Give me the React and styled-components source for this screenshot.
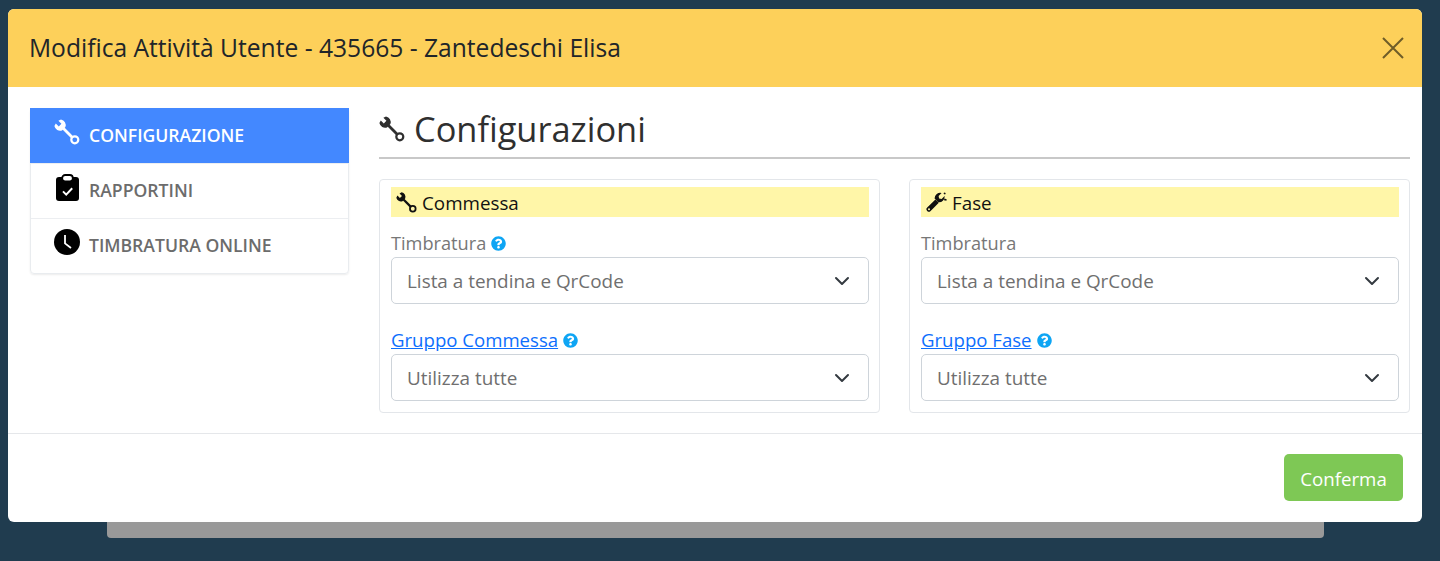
import React from "react";
import styled, { createGlobalStyle } from "styled-components";
import { FaQuestionCircle } from "react-icons/fa";

const GlobalStyle = createGlobalStyle`
  html, body {
    margin: 0;
    height: 100%;
    background: #203c4f;
    font-family: "Open Sans", "Noto Sans", sans-serif;
    overflow: hidden;
  }
`;

const Page = styled.div`
  position: relative;
  width: 1440px;
  height: 561px;
  box-sizing: border-box;
  padding: 9px 18px 0 8px;
`;

const BackCard = styled.div`
  position: absolute;
  left: 107px;
  top: 500px;
  width: 1217px;
  height: 38px;
  background: #999;
  border-radius: 4px;
`;

const Modal = styled.div`
  position: relative;
  height: 513px;
  display: flex;
  flex-direction: column;
  background: #fff;
  border-radius: 6px;
  overflow: hidden;
`;

const Header = styled.header`
  height: 78px;
  flex: none;
  display: flex;
  align-items: center;
  justify-content: space-between;
  box-sizing: border-box;
  padding: 0 18px 0 21px;
  background: #fdd05a;
`;

const Title = styled.h5`
  margin: 0;
  padding-bottom: 2px;
  font-size: 24.6px;
  font-weight: 500;
  color: #212529;
`;

const CloseIcon = styled.svg`
  width: 22px;
  height: 22px;
  display: block;
  stroke: #6f5d28;
  stroke-width: 2;
  fill: none;
`;

const Body = styled.div`
  flex: 1;
  display: flex;
  align-items: flex-start;
  gap: 30px;
  padding: 21px 12px 0 22px;
`;

const Sidebar = styled.nav`
  width: 319px;
  flex: none;
  box-sizing: border-box;
  border: 1px solid #e9ecef;
  border-radius: 4px;
  box-shadow: 0 1px 2px rgba(0, 0, 0, 0.08);
`;

const NavItem = styled.a`
  height: ${(p) => (p.$active ? "55px" : "54.5px")};
  margin: ${(p) => (p.$active ? "-1px -1px 0" : "0")};
  display: flex;
  align-items: center;
  gap: 9px;
  box-sizing: border-box;
  padding: 0 0 1px ${(p) => (p.$active ? "24px" : "23px")};
  font-size: 17.6px;
  font-weight: 600;
  color: ${(p) => (p.$active ? "#fff" : "#6c6c6c")};
  background: ${(p) => (p.$active ? "#4388ff" : "transparent")};
  & + & {
    border-top: 1px solid #eceef1;
  }
  &:last-child {
    height: 55px;
    padding-bottom: 2px;
  }
`;

const NavIcon = styled.span`
  width: 26px;
  height: 30px;
  margin-top: -6px;
  display: flex;
  align-items: center;
  justify-content: center;
  color: ${(p) => (p.$active ? "#fff" : "#000")};
`;

const Content = styled.main`
  flex: 1;
  min-width: 0;
`;

const SectionTitle = styled.h3`
  margin: 0 0 20px;
  height: 51px;
  display: flex;
  align-items: center;
  gap: 9px;
  box-sizing: border-box;
  border-bottom: 2px solid #c8c8c8;
  font-size: 34.4px;
  font-weight: 500;
  color: #2f2f2f;
  padding-bottom: 8px;
`;

const Columns = styled.div`
  display: grid;
  grid-template-columns: 501px 501px;
  gap: 29px;
`;

const Panel = styled.section`
  height: 234px;
  box-sizing: border-box;
  padding: 7px 10px 0 11px;
  border: 1px solid #e3e6ea;
  border-radius: 4px;
`;

const PanelTitle = styled.div`
  height: 30px;
  display: flex;
  align-items: center;
  gap: 5px;
  padding: 0 0 0 5px;
  background: #fff6a8;
  font-size: 18.8px;
  font-weight: 500;
  color: #111;
`;

const PanelTitleText = styled.span`
  position: relative;
  top: 1px;
`;

const Field = styled.div`
  margin-top: ${(p) => p.$gap}px;
`;

const Label = styled.div`
  height: 26px;
  display: flex;
  align-items: center;
  gap: 5px;
  box-sizing: border-box;
  padding-bottom: 3px;
  font-size: 18.2px;
  color: #777;
`;

const LabelLink = styled.a`
  color: #0d6efd;
  font-size: 18.6px;
  text-decoration: underline;
`;

const Help = styled(FaQuestionCircle)`
  width: 15px;
  height: 15px;
  color: #0ea5f4;
  margin-top: 2px;
`;

const Select = styled.div`
  height: 47px;
  display: flex;
  align-items: center;
  justify-content: space-between;
  box-sizing: border-box;
  padding: 0 18px 0 15px;
  border: 1px solid #ced4da;
  border-radius: 5px;
  font-size: 18.9px;
  color: #6f6f6f;
`;

const Chevron = styled.svg`
  width: 16px;
  height: 16px;
  fill: none;
  stroke: #343a40;
  stroke-width: 2;
  stroke-linecap: round;
  stroke-linejoin: round;
`;

const Footer = styled.footer`
  height: 89px;
  flex: none;
  display: flex;
  align-items: center;
  justify-content: flex-end;
  box-sizing: border-box;
  padding: 0 19px 2px 0;
  border-top: 1px solid #e5e7ea;
`;

const ConfirmButton = styled.button`
  width: 119px;
  height: 47px;
  border: 0;
  border-radius: 5px;
  padding: 2px 0 0;
  background: #7ec855;
  color: #fff;
  font-family: inherit;
  font-size: 18.7px;
`;

function Wrench({ size = 26 }) {
  return (
    <svg width={size} height={size} viewBox="0 0 26 26" fill="none" stroke="currentColor">
      <path
        d="M7 .4 4.4 1.8 7.4 4.8 4.8 7.4 1.8 4.4.4 7A5.8 5.8 0 0 0 8 11.4L11.4 8A5.8 5.8 0 0 0 7 .4Z"
        fill="currentColor"
        stroke="none"
      />
      <path d="M9 9 18.4 18.4" strokeWidth="2.8" />
      <circle cx="20.8" cy="20.8" r="3.5" strokeWidth="2.2" />
    </svg>
  );
}

function GearWrench() {
  return (
    <svg width="21" height="21" viewBox="0 0 21 21">
      <path d="M1.2 15.6 9.4 7.4l3.4 3.4-8.2 8.2a2.4 2.4 0 0 1-3.4-3.4Z" fill="currentColor" />
      <circle cx="3" cy="17.3" r="1" fill="#fff6a8" />
      <path
        d="M8.6 6.4A5.6 5.6 0 0 1 15.6.9l-3 3 .5 2.5 2.5.5 3-3a5.6 5.6 0 0 1-6.6 6.2Z"
        fill="currentColor"
      />
      <path d="m18 .6 1.8.4-.7 1.6-1.5-.6ZM20.4 8.8l-2.5-.6.6-1.7 2.2.8Z" fill="currentColor" />
    </svg>
  );
}

function ClipboardCheck() {
  return (
    <svg width="23" height="27" viewBox="0 0 23 27">
      <path
        d="M3 3h17a3 3 0 0 1 3 3v18a3 3 0 0 1-3 3H3a3 3 0 0 1-3-3V6a3 3 0 0 1 3-3Z"
        fill="currentColor"
      />
      <rect x="6.2" y="1" width="10.6" height="6.4" rx="3" fill="#fff" stroke="currentColor" strokeWidth="1.8" />
      <path d="m7 17.4 3.2 3.2 6-6.4" fill="none" stroke="#fff" strokeWidth="2" />
    </svg>
  );
}

function ClockIcon() {
  return (
    <svg width="26" height="26" viewBox="0 0 26 26">
      <circle cx="13" cy="13" r="13" fill="currentColor" />
      <path d="M11 6v8.4l6 4.6" fill="none" stroke="#fff" strokeWidth="1.8" />
    </svg>
  );
}

function SelectBox({ value }) {
  return (
    <Select>
      {value}
      <Chevron viewBox="0 0 16 16">
        <path d="m2 5 6 6 6-6" />
      </Chevron>
    </Select>
  );
}

function ConfigPanel({ icon, title, help, group }) {
  return (
    <Panel>
      <PanelTitle>
        {icon}
        <PanelTitleText>{title}</PanelTitleText>
      </PanelTitle>
      <Field $gap={14}>
        <Label>
          Timbratura
          {help && <Help />}
        </Label>
        <SelectBox value="Lista a tendina e QrCode" />
      </Field>
      <Field $gap={24}>
        <Label>
          <LabelLink href="#">{group}</LabelLink>
          <Help />
        </Label>
        <SelectBox value="Utilizza tutte" />
      </Field>
    </Panel>
  );
}

export default function App() {
  return (
    <Page>
      <GlobalStyle />
      <BackCard />
      <Modal>
        <Header>
          <Title>Modifica Attività Utente - 435665 - Zantedeschi Elisa</Title>
          <CloseIcon viewBox="0 0 22 22">
            <path d="M1 1l20 20M21 1 1 21" />
          </CloseIcon>
        </Header>
        <Body>
          <Sidebar>
            <NavItem $active>
              <NavIcon $active>
                <Wrench />
              </NavIcon>
              CONFIGURAZIONE
            </NavItem>
            <NavItem>
              <NavIcon>
                <ClipboardCheck />
              </NavIcon>
              RAPPORTINI
            </NavItem>
            <NavItem>
              <NavIcon>
                <ClockIcon />
              </NavIcon>
              TIMBRATURA ONLINE
            </NavItem>
          </Sidebar>
          <Content>
            <SectionTitle>
              <Wrench />
              Configurazioni
            </SectionTitle>
            <Columns>
              <ConfigPanel icon={<Wrench size={21} />} title="Commessa" help group="Gruppo Commessa" />
              <ConfigPanel icon={<GearWrench />} title="Fase" group="Gruppo Fase" />
            </Columns>
          </Content>
        </Body>
        <Footer>
          <ConfirmButton>Conferma</ConfirmButton>
        </Footer>
      </Modal>
    </Page>
  );
}
